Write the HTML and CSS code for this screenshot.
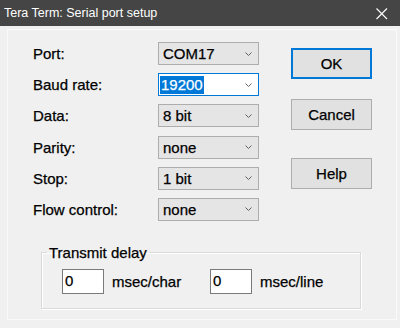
FILE: index.html
```html
<!DOCTYPE html>
<html>
<head>
<meta charset="utf-8">
<link rel="stylesheet" href="styles.css">
</head>
<body>
<div class="window">
  <div class="titlebar">
    <span class="title">Tera Term: Serial port setup</span>
    <svg class="close" width="12" height="12" viewBox="0 0 12 12"><path d="M0.5 0.5 L11 11 M11 0.5 L0.5 11" stroke="#fff" stroke-width="1.1" fill="none"/></svg>
  </div>
  <div class="body">
    <div class="panel">
      <div class="top">
        <div class="fields">
          <span class="label">Port:</span>
          <div class="select"><span class="value">COM17</span><svg class="chev" width="7" height="4" viewBox="0 0 7 4"><path d="M0.5 0.5 L3.5 3.5 L6.5 0.5" stroke="#606060" fill="none"/></svg></div>
          <span class="label">Baud rate:</span>
          <div class="select edit"><span class="value sel">19200</span><svg class="chev" width="7" height="4" viewBox="0 0 7 4"><path d="M0.5 0.5 L3.5 3.5 L6.5 0.5" stroke="#606060" fill="none"/></svg></div>
          <span class="label">Data:</span>
          <div class="select"><span class="value">8 bit</span><svg class="chev" width="7" height="4" viewBox="0 0 7 4"><path d="M0.5 0.5 L3.5 3.5 L6.5 0.5" stroke="#606060" fill="none"/></svg></div>
          <span class="label">Parity:</span>
          <div class="select"><span class="value">none</span><svg class="chev" width="7" height="4" viewBox="0 0 7 4"><path d="M0.5 0.5 L3.5 3.5 L6.5 0.5" stroke="#606060" fill="none"/></svg></div>
          <span class="label">Stop:</span>
          <div class="select"><span class="value">1 bit</span><svg class="chev" width="7" height="4" viewBox="0 0 7 4"><path d="M0.5 0.5 L3.5 3.5 L6.5 0.5" stroke="#606060" fill="none"/></svg></div>
          <span class="label">Flow control:</span>
          <div class="select"><span class="value">none</span><svg class="chev" width="7" height="4" viewBox="0 0 7 4"><path d="M0.5 0.5 L3.5 3.5 L6.5 0.5" stroke="#606060" fill="none"/></svg></div>
        </div>
        <div class="buttons">
          <div class="btn default">OK</div>
          <div class="btn cancel">Cancel</div>
          <div class="btn help">Help</div>
        </div>
      </div>
      <fieldset class="group">
        <legend>Transmit delay</legend>
        <div class="delays">
          <div class="delay"><div class="input">0</div><span>msec/char</span></div>
          <div class="delay"><div class="input">0</div><span>msec/line</span></div>
        </div>
      </fieldset>
    </div>
  </div>
</div>
</body>
</html>
```
FILE: styles.css
```css
* { box-sizing: border-box; }
html, body { margin: 0; padding: 0; }
body { width: 400px; height: 328px; overflow: hidden; background: #f0f0f0; }
.window {
  width: 400px; height: 328px;
  background: #f0f0f0;
  font-family: "Liberation Sans", Arial, sans-serif;
  font-size: 15px;
  color: #000;
  display: flex; flex-direction: column;
}
.panel { -webkit-text-stroke: 0.25px #000; }
.value.sel { -webkit-text-stroke: 0.25px #fff; }
.titlebar {
  height: 26px; flex: none;
  background: #454545;
  color: #fff;
  display: flex; align-items: center; justify-content: space-between;
  padding: 0 12px 0 4px;
}
.title { font-size: 12.5px; line-height: 26px; }
.close { display: block; margin-top: 1px; }
.body { padding: 3px 3px 0 7px; flex: none; }
.panel {
  width: 390px; height: 291px;
  border: 1px solid #fafafa;
  display: flex; flex-direction: column;
}
.top { display: flex; align-items: flex-start; }
.fields {
  margin: 12px 0 0 25px;
  display: grid;
  grid-template-columns: 125px 101px;
  grid-auto-rows: 23px;
  row-gap: 8.2px;
  align-items: center;
}
.label { line-height: 17px; }
.select {
  height: 23px;
  border: 1px solid #adadad;
  background: #e5e5e5;
  display: flex; align-items: center; justify-content: space-between;
  padding: 0 6px 0 4px;
}
.select.edit { background: #fff; border-color: #0078d7; padding-left: 1px; }
.value { line-height: 17px; }
.value.sel { background: #0078d7; color: #fff; padding: 0 1px; line-height: 18px; }
.chev { display: block; }
.buttons { margin: 18px 0 0 32px; display: flex; flex-direction: column; }
.btn {
  width: 81px; height: 31px;
  border: 1px solid #adadad;
  background: #e1e1e1;
  display: flex; align-items: center; justify-content: center;
}
.btn.default { border: 2px solid #0078d7; }
.btn.cancel { margin-top: 20px; }
.btn.help { margin-top: 28px; }
.group {
  margin: 23px 0 0 33px;
  width: 320px;
  padding: 8px 0 14px 0;
  border: 1px solid #d9d9d9;
  box-shadow: 1px 1px 0 #fff, inset 1px 1px 0 #fff;
  min-width: 0;
}
.group legend { margin-left: 5px; padding: 0 2px; line-height: 17px; }
.delays { display: flex; padding-left: 20px; }
.delay { width: 148px; display: flex; align-items: center; gap: 8px; }
.input {
  width: 42px; height: 25px;
  border: 1px solid #7a7a7a;
  background: #fff;
  padding-left: 2px;
  line-height: 21px;
}
```
